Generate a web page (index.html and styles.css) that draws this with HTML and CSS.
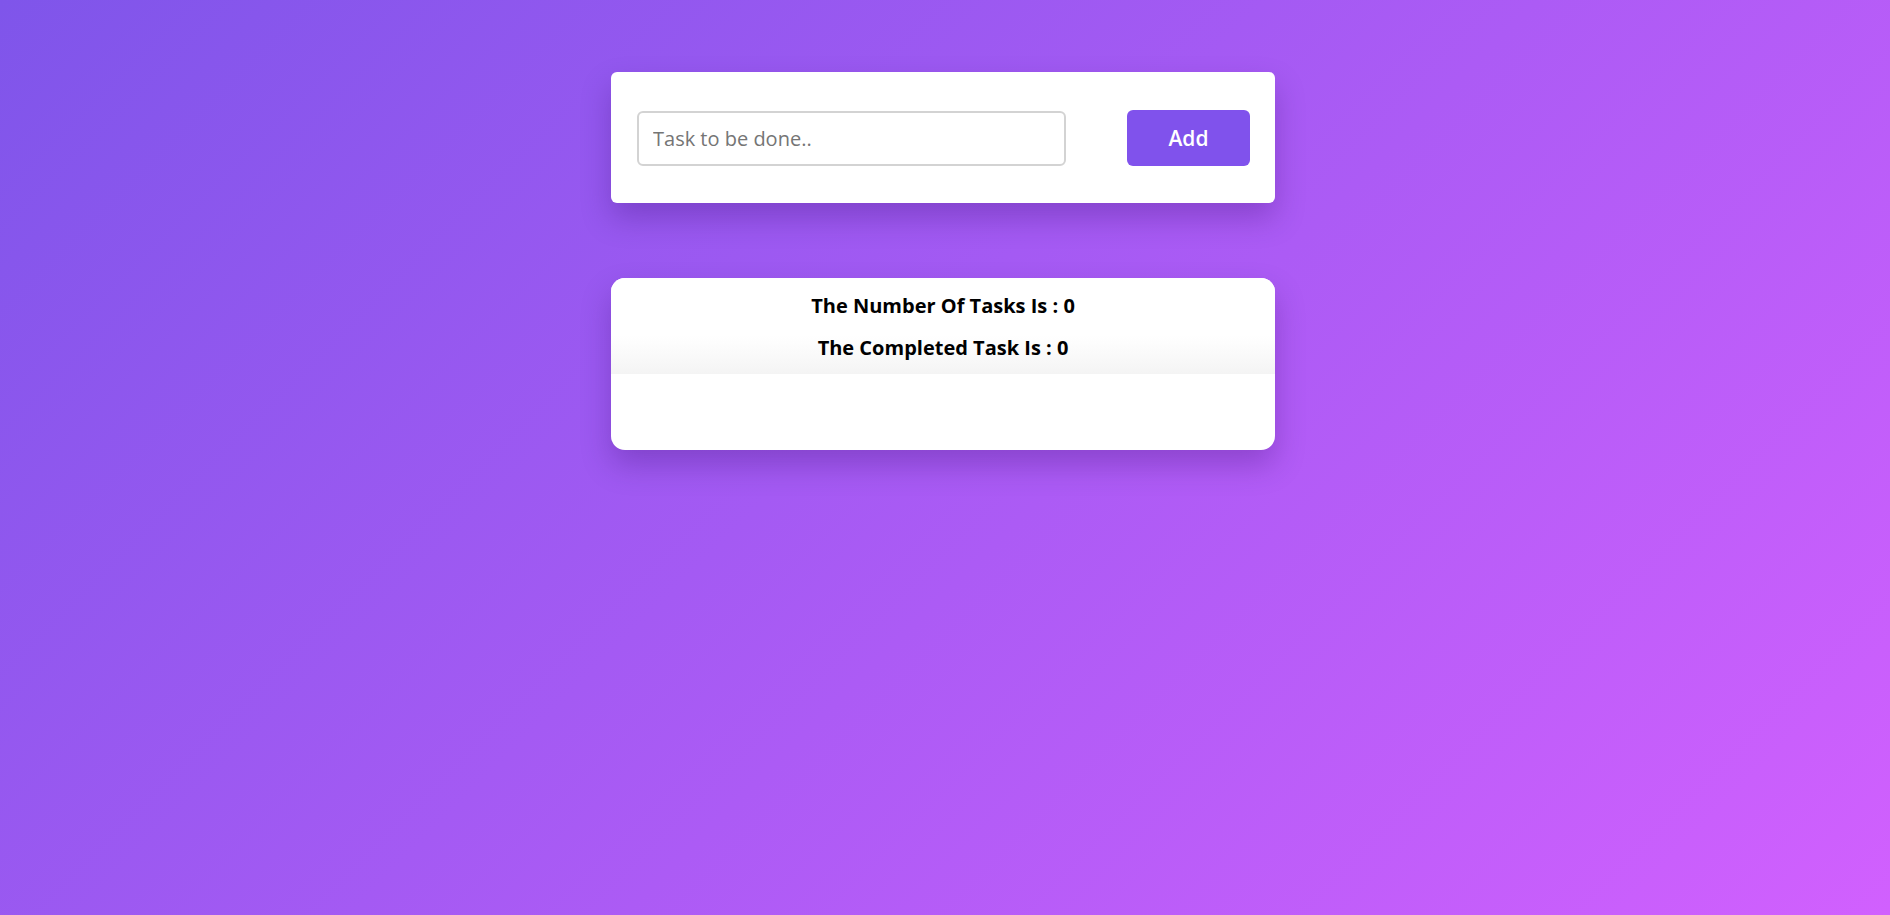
FILE: index.html
```html
<!DOCTYPE html>
<html lang="en">
<head>
<meta charset="utf-8">
<title>Todo</title>
<link rel="stylesheet" href="styles.css">
</head>
<body>
<main class="container">
  <form class="card add-card" onsubmit="return false;">
    <input class="task-input" type="text" placeholder="Task to be done..">
    <button class="add-btn" type="submit">Add</button>
  </form>
  <section class="card tasks-card">
    <div class="tasks-header">
      <h3 class="stat">The Number Of Tasks Is : 0</h3>
      <h3 class="stat">The Completed Task Is : 0</h3>
    </div>
    <div class="tasks-list"></div>
  </section>
</main>
</body>
</html>
```
FILE: styles.css
```css
* { box-sizing: border-box; }
html, body { margin: 0; padding: 0; }
body {
  min-height: 100vh;
  padding-right: 4px;
  background: linear-gradient(135deg, #7f55ea 0%, #d160fe 100%);
  font-family: "Open Sans", "Noto Sans", sans-serif;
}
.container {
  width: 664px;
  margin: 0 auto;
  padding-top: 72px;
  display: flex;
  flex-direction: column;
  gap: 75px;
}
.card {
  background: #fff;
  box-shadow: 0 15px 30px rgba(40, 0, 90, 0.25);
}
.add-card {
  margin: 0;
  border-radius: 6px;
  padding: 38px 25px 37px 26px;
  display: flex;
  justify-content: space-between;
  align-items: center;
}
.task-input {
  width: 429px;
  height: 55px;
  border: 2px solid #d3d3d3;
  border-radius: 6px;
  padding: 0 14px;
  font-family: inherit;
  font-size: 20px;
  color: #333;
  outline: none;
}
.task-input::placeholder { color: #757575; }
.add-btn {
  width: 123px;
  height: 56px;
  border: none;
  border-radius: 6px;
  background: #8052ec;
  color: #fff;
  font-family: inherit;
  font-size: 21px;
  font-weight: 600;
  cursor: pointer;
}
.tasks-card {
  border-radius: 14px;
  overflow: hidden;
}
.tasks-header {
  display: flex;
  flex-direction: column;
  align-items: center;
  gap: 13px;
  padding: 13px 0 12px;
  background: linear-gradient(to bottom, #ffffff 0%, #ffffff 60%, #f4f4f4 100%);
}
.stat {
  margin: 0;
  font-size: 20px;
  line-height: 29px;
  font-weight: 700;
  color: #000;
}
.tasks-list {
  height: 76px;
}
```
